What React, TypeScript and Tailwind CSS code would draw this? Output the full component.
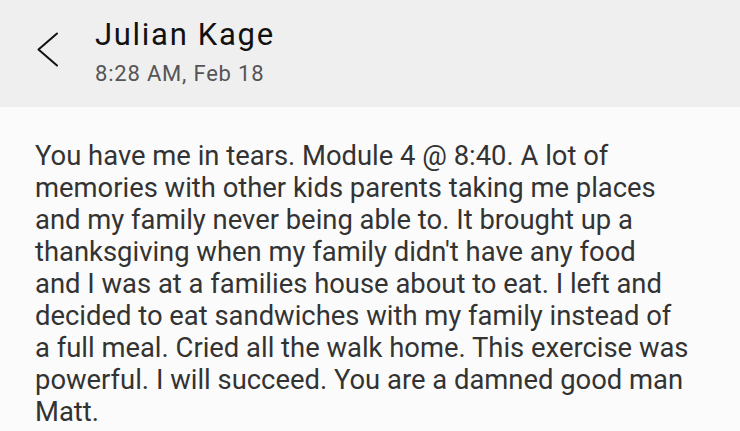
const LINES = [
  'You have me in tears. Module 4 @ 8:40. A lot of',
  'memories with other kids parents taking me places',
  'and my family never being able to. It brought up a',
  "thanksgiving when my family didn't have any food",
  'and I was at a families house about to eat. I left and',
  'decided to eat sandwiches with my family instead of',
  'a full meal. Cried all the walk home. This exercise was',
  'powerful. I will succeed. You are a damned good man',
  'Matt.',
]

export default function App() {
  return (
    <div className="w-[740px] h-[431px] overflow-hidden bg-[#fbfbfb] font-['Roboto',sans-serif]">
      <div className="h-[107px] bg-[#efefef] flex items-start">
        <div className="w-[95px] pt-[32px] pl-[37px]">
          <svg width="22" height="36" viewBox="0 0 22 36" fill="none">
            <polyline points="20,1.5 1.5,17.5 20,33.5" stroke="#111" strokeWidth="2" strokeLinecap="round" strokeLinejoin="round" />
          </svg>
        </div>
        <div className="pt-[17px]">
          <div className="text-[31px] leading-[36px] tracking-[1.7px] text-[#111]">Julian Kage</div>
          <div className="mt-[7px] text-[22px] leading-[28px] tracking-[0.8px] text-[#555]">8:28 AM, Feb 18</div>
        </div>
      </div>
      <div className="pt-[33px] pl-[35px]">
        <p className="text-[27.4px] leading-[32px] text-[#333] whitespace-nowrap">
          {LINES.map((line, i) => (
            <span key={i} className="block">
              {line}
            </span>
          ))}
        </p>
      </div>
    </div>
  )
}
